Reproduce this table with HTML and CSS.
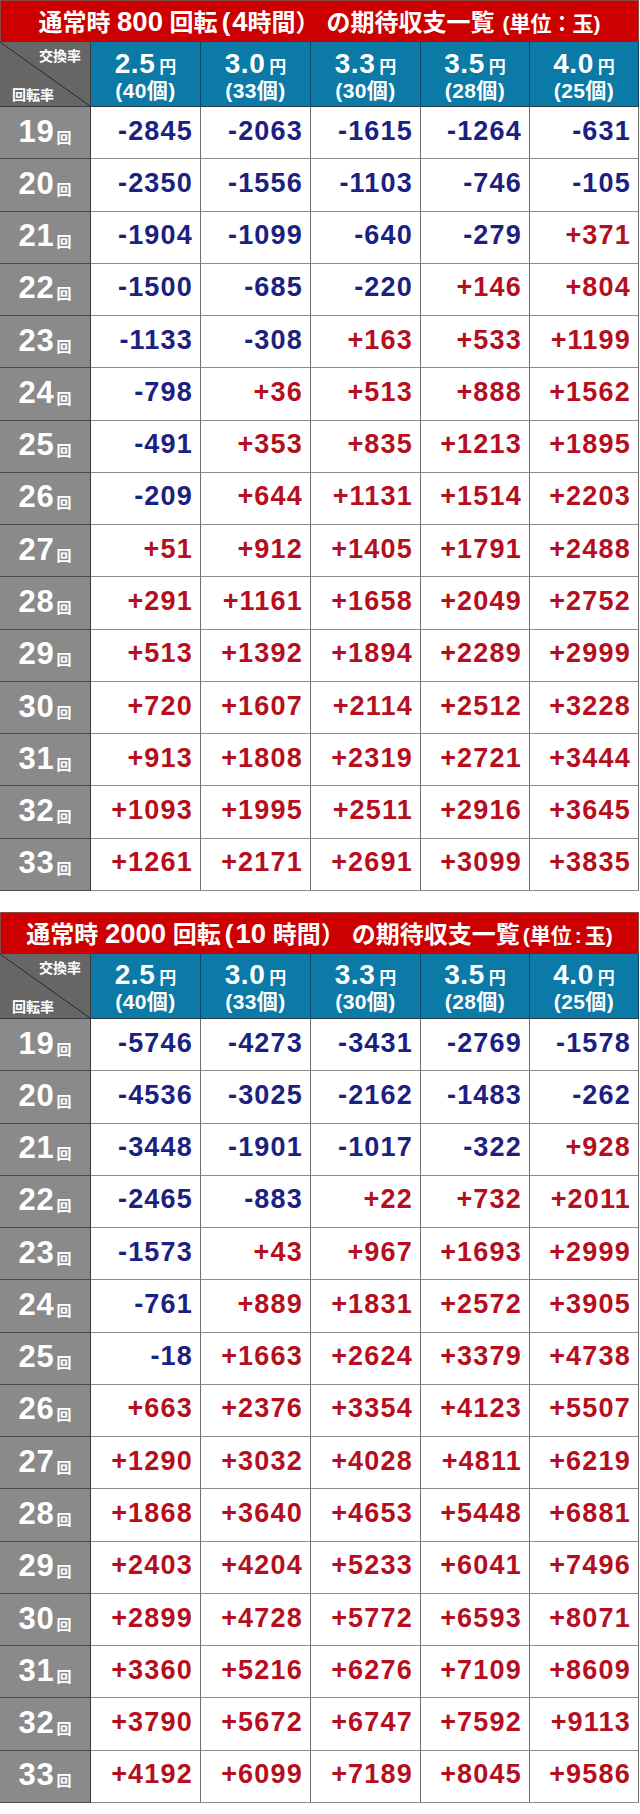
FILE: index.html
```html
<!DOCTYPE html>
<html lang="ja">
<head>
<meta charset="utf-8">
<title>期待収支一覧</title>
<link rel="stylesheet" href="styles.css">
</head>
<body>
<div class="page">
  <section class="block">
    <h2 class="title">通常時 <span class="d">800</span> 回転<span class="po">(</span><span class="d">4</span>時間<span class="pc">）</span>の期待収支一覧<span class="unit">(単位：玉)</span></h2>
    <div class="grid">
      <div class="corner"><span class="c-top">交換率</span><span class="c-bot">回転率</span></div>
      <div class="hd"><div class="rate">2.5<small>円</small></div><div class="balls">(40個)</div></div>
      <div class="hd"><div class="rate">3.0<small>円</small></div><div class="balls">(33個)</div></div>
      <div class="hd"><div class="rate">3.3<small>円</small></div><div class="balls">(30個)</div></div>
      <div class="hd"><div class="rate">3.5<small>円</small></div><div class="balls">(28個)</div></div>
      <div class="hd"><div class="rate">4.0<small>円</small></div><div class="balls">(25個)</div></div>

      <div class="rh">19<small>回</small></div><div class="v n">-2845</div><div class="v n">-2063</div><div class="v n">-1615</div><div class="v n">-1264</div><div class="v n">-631</div>
      <div class="rh">20<small>回</small></div><div class="v n">-2350</div><div class="v n">-1556</div><div class="v n">-1103</div><div class="v n">-746</div><div class="v n">-105</div>
      <div class="rh">21<small>回</small></div><div class="v n">-1904</div><div class="v n">-1099</div><div class="v n">-640</div><div class="v n">-279</div><div class="v p">+371</div>
      <div class="rh">22<small>回</small></div><div class="v n">-1500</div><div class="v n">-685</div><div class="v n">-220</div><div class="v p">+146</div><div class="v p">+804</div>
      <div class="rh">23<small>回</small></div><div class="v n">-1133</div><div class="v n">-308</div><div class="v p">+163</div><div class="v p">+533</div><div class="v p">+1199</div>
      <div class="rh">24<small>回</small></div><div class="v n">-798</div><div class="v p">+36</div><div class="v p">+513</div><div class="v p">+888</div><div class="v p">+1562</div>
      <div class="rh">25<small>回</small></div><div class="v n">-491</div><div class="v p">+353</div><div class="v p">+835</div><div class="v p">+1213</div><div class="v p">+1895</div>
      <div class="rh">26<small>回</small></div><div class="v n">-209</div><div class="v p">+644</div><div class="v p">+1131</div><div class="v p">+1514</div><div class="v p">+2203</div>
      <div class="rh">27<small>回</small></div><div class="v p">+51</div><div class="v p">+912</div><div class="v p">+1405</div><div class="v p">+1791</div><div class="v p">+2488</div>
      <div class="rh">28<small>回</small></div><div class="v p">+291</div><div class="v p">+1161</div><div class="v p">+1658</div><div class="v p">+2049</div><div class="v p">+2752</div>
      <div class="rh">29<small>回</small></div><div class="v p">+513</div><div class="v p">+1392</div><div class="v p">+1894</div><div class="v p">+2289</div><div class="v p">+2999</div>
      <div class="rh">30<small>回</small></div><div class="v p">+720</div><div class="v p">+1607</div><div class="v p">+2114</div><div class="v p">+2512</div><div class="v p">+3228</div>
      <div class="rh">31<small>回</small></div><div class="v p">+913</div><div class="v p">+1808</div><div class="v p">+2319</div><div class="v p">+2721</div><div class="v p">+3444</div>
      <div class="rh">32<small>回</small></div><div class="v p">+1093</div><div class="v p">+1995</div><div class="v p">+2511</div><div class="v p">+2916</div><div class="v p">+3645</div>
      <div class="rh">33<small>回</small></div><div class="v p">+1261</div><div class="v p">+2171</div><div class="v p">+2691</div><div class="v p">+3099</div><div class="v p">+3835</div>
    </div>
  </section>

  <section class="block">
    <h2 class="title">通常時 <span class="d">2000</span> 回転<span class="po">(</span><span class="d">10</span> 時間<span class="pc">）</span>の期待収支一覧<span class="unit unit-2">(単位<span class="colon">:</span>玉)</span></h2>
    <div class="grid">
      <div class="corner"><span class="c-top">交換率</span><span class="c-bot">回転率</span></div>
      <div class="hd"><div class="rate">2.5<small>円</small></div><div class="balls">(40個)</div></div>
      <div class="hd"><div class="rate">3.0<small>円</small></div><div class="balls">(33個)</div></div>
      <div class="hd"><div class="rate">3.3<small>円</small></div><div class="balls">(30個)</div></div>
      <div class="hd"><div class="rate">3.5<small>円</small></div><div class="balls">(28個)</div></div>
      <div class="hd"><div class="rate">4.0<small>円</small></div><div class="balls">(25個)</div></div>

      <div class="rh">19<small>回</small></div><div class="v n">-5746</div><div class="v n">-4273</div><div class="v n">-3431</div><div class="v n">-2769</div><div class="v n">-1578</div>
      <div class="rh">20<small>回</small></div><div class="v n">-4536</div><div class="v n">-3025</div><div class="v n">-2162</div><div class="v n">-1483</div><div class="v n">-262</div>
      <div class="rh">21<small>回</small></div><div class="v n">-3448</div><div class="v n">-1901</div><div class="v n">-1017</div><div class="v n">-322</div><div class="v p">+928</div>
      <div class="rh">22<small>回</small></div><div class="v n">-2465</div><div class="v n">-883</div><div class="v p">+22</div><div class="v p">+732</div><div class="v p">+2011</div>
      <div class="rh">23<small>回</small></div><div class="v n">-1573</div><div class="v p">+43</div><div class="v p">+967</div><div class="v p">+1693</div><div class="v p">+2999</div>
      <div class="rh">24<small>回</small></div><div class="v n">-761</div><div class="v p">+889</div><div class="v p">+1831</div><div class="v p">+2572</div><div class="v p">+3905</div>
      <div class="rh">25<small>回</small></div><div class="v n">-18</div><div class="v p">+1663</div><div class="v p">+2624</div><div class="v p">+3379</div><div class="v p">+4738</div>
      <div class="rh">26<small>回</small></div><div class="v p">+663</div><div class="v p">+2376</div><div class="v p">+3354</div><div class="v p">+4123</div><div class="v p">+5507</div>
      <div class="rh">27<small>回</small></div><div class="v p">+1290</div><div class="v p">+3032</div><div class="v p">+4028</div><div class="v p">+4811</div><div class="v p">+6219</div>
      <div class="rh">28<small>回</small></div><div class="v p">+1868</div><div class="v p">+3640</div><div class="v p">+4653</div><div class="v p">+5448</div><div class="v p">+6881</div>
      <div class="rh">29<small>回</small></div><div class="v p">+2403</div><div class="v p">+4204</div><div class="v p">+5233</div><div class="v p">+6041</div><div class="v p">+7496</div>
      <div class="rh">30<small>回</small></div><div class="v p">+2899</div><div class="v p">+4728</div><div class="v p">+5772</div><div class="v p">+6593</div><div class="v p">+8071</div>
      <div class="rh">31<small>回</small></div><div class="v p">+3360</div><div class="v p">+5216</div><div class="v p">+6276</div><div class="v p">+7109</div><div class="v p">+8609</div>
      <div class="rh">32<small>回</small></div><div class="v p">+3790</div><div class="v p">+5672</div><div class="v p">+6747</div><div class="v p">+7592</div><div class="v p">+9113</div>
      <div class="rh">33<small>回</small></div><div class="v p">+4192</div><div class="v p">+6099</div><div class="v p">+7189</div><div class="v p">+8045</div><div class="v p">+9586</div>
    </div>
  </section>
</div>
</body>
</html>
```

FILE: styles.css
```css
* { box-sizing: border-box; }
html, body { margin: 0; padding: 0; background: #fff; }
body {
  font-family: "Liberation Sans", "Noto Sans CJK JP", sans-serif;
  font-weight: 700;
  color: #fff;
}
.page {
  width: 640px;
  display: flex;
  flex-direction: column;
  gap: 21px;
}
.block { width: 639px; }
.title {
  margin: 0;
  height: 42px;
  background: #cc0000;
  border: 1px solid #8a4a4a;
  border-bottom: none;
  text-align: center;
  font-size: 24px;
  line-height: 41px;
  font-weight: 700;
  color: #fff;
  white-space: nowrap;
}
.title .d {
  font-size: 27.5px;
}
.title .po {
  font-size: 26px;
  margin-left: 4px;
  margin-right: 2px;
}
.title .pc {
  margin-right: 7px;
}
.title .unit {
  font-size: 21px;
  margin-left: 8px;
}
.title .unit-2 {
  margin-left: 3px;
}
.title .colon {
  margin: 0 3px;
}
.grid {
  display: grid;
  grid-template-columns: 91px 110px 110px 110px 109px 109px;
  grid-template-rows: 65px;
  grid-auto-rows: 52.27px;
}
.corner {
  background: #666 linear-gradient(to top right, #666 calc(50% - 0.7px), #1e1e1e 50%, #666 calc(50% + 0.7px));
  border-right: 1px solid #3a3a3a;
  border-bottom: 1px solid #3a3a3a;
  display: flex;
  flex-direction: column;
  justify-content: space-between;
  padding: 5px 9px 4px 12px;
  font-size: 14px;
  line-height: 16px;
  font-family: "Noto Sans CJK JP", sans-serif;
}
.c-top { align-self: flex-end; }
.c-bot { align-self: flex-start; }
.hd {
  background: #0b7aa6;
  border-right: 1px solid #0a4766;
  border-bottom: 1px solid #2c3b45;
  display: flex;
  flex-direction: column;
  align-items: center;
  justify-content: center;
  padding-top: 5px;
}
.rate {
  font-size: 28px;
  line-height: 26px;
  letter-spacing: 0.5px;
}
.rate small {
  font-size: 17px;
  margin-left: 4px;
  font-family: "Noto Sans CJK JP", sans-serif;
  letter-spacing: 0;
}
.balls {
  font-size: 21px;
  line-height: 24px;
  letter-spacing: 0.4px;
}
.rh {
  background: #8a8a8a;
  border-right: 1px solid #3a3a3a;
  border-bottom: 1px solid #4a4a4a;
  display: flex;
  align-items: center;
  justify-content: center;
  font-size: 31px;
  letter-spacing: 0.8px;
  padding-bottom: 2px;
}
.rh small {
  font-size: 15px;
  margin-left: 2px;
  margin-top: 9px;
  font-family: "Noto Sans CJK JP", sans-serif;
  letter-spacing: 0;
}
.v {
  background: #fff;
  border-right: 1px solid #6e6e6e;
  border-bottom: 1px solid #8c8c8c;
  display: flex;
  align-items: center;
  justify-content: flex-end;
  padding-right: 7px;
  padding-bottom: 3px;
  font-size: 27px;
  letter-spacing: 1.2px;
}
.v.n { color: #1b2180; }
.v.p { color: #b50f1f; }
```
